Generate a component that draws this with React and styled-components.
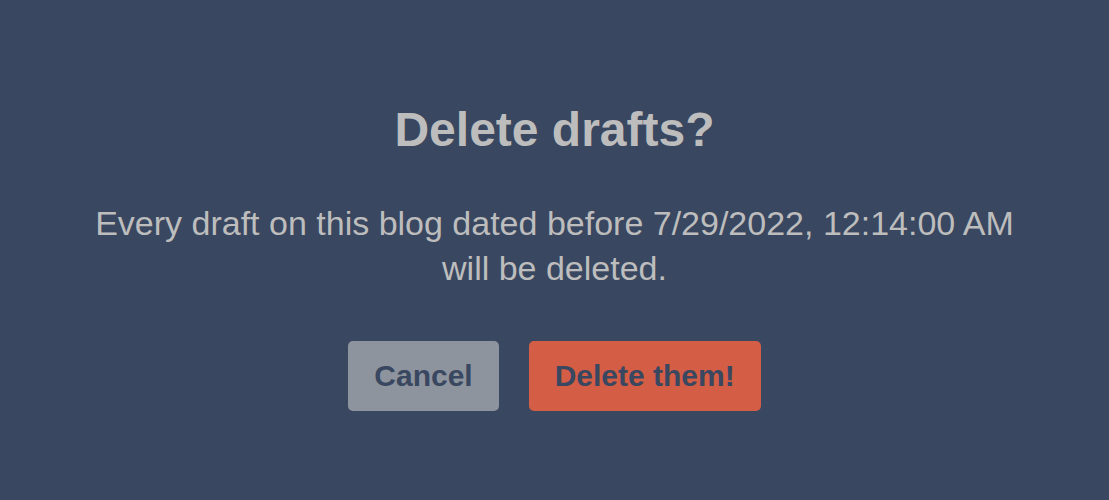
import React from "react";
import styled, { createGlobalStyle } from "styled-components";

const Global = createGlobalStyle`
  html, body { margin: 0; padding: 0; background: #394760; }
  body { font-family: "Liberation Sans", Arial, Helvetica, sans-serif; }
`;

const Page = styled.div`
  width: 1109px;
  height: 500px;
  background: #394760;
  display: flex;
  flex-direction: column;
  align-items: center;
  padding-top: 102px;
  box-sizing: border-box;
`;

const Title = styled.h1`
  margin: 0;
  font-size: 48px;
  line-height: 56px;
  font-weight: 700;
  color: #bdbdbd;
`;

const Message = styled.p`
  margin: 43px 0 0;
  max-width: 950px;
  font-size: 34px;
  line-height: 45px;
  text-align: center;
  color: #bdbdbd;
`;

const Actions = styled.div`
  display: flex;
  gap: 30px;
  margin-top: 50px;
`;

const Button = styled.button`
  height: 70px;
  padding: 0 26px;
  border: none;
  border-radius: 5px;
  font-family: "Liberation Sans", Arial, sans-serif;
  font-size: 30px;
  font-weight: 700;
  color: #394760;
  background: ${(p) => (p.$danger ? "#d45d45" : "#8e949e")};
  cursor: pointer;
`;

export default function App() {
  return (
    <>
      <Global />
      <Page>
        <Title>Delete drafts?</Title>
        <Message>
          Every draft on this blog dated before 7/29/2022, 12:14:00 AM will be deleted.
        </Message>
        <Actions>
          <Button>Cancel</Button>
          <Button $danger>Delete them!</Button>
        </Actions>
      </Page>
    </>
  );
}
